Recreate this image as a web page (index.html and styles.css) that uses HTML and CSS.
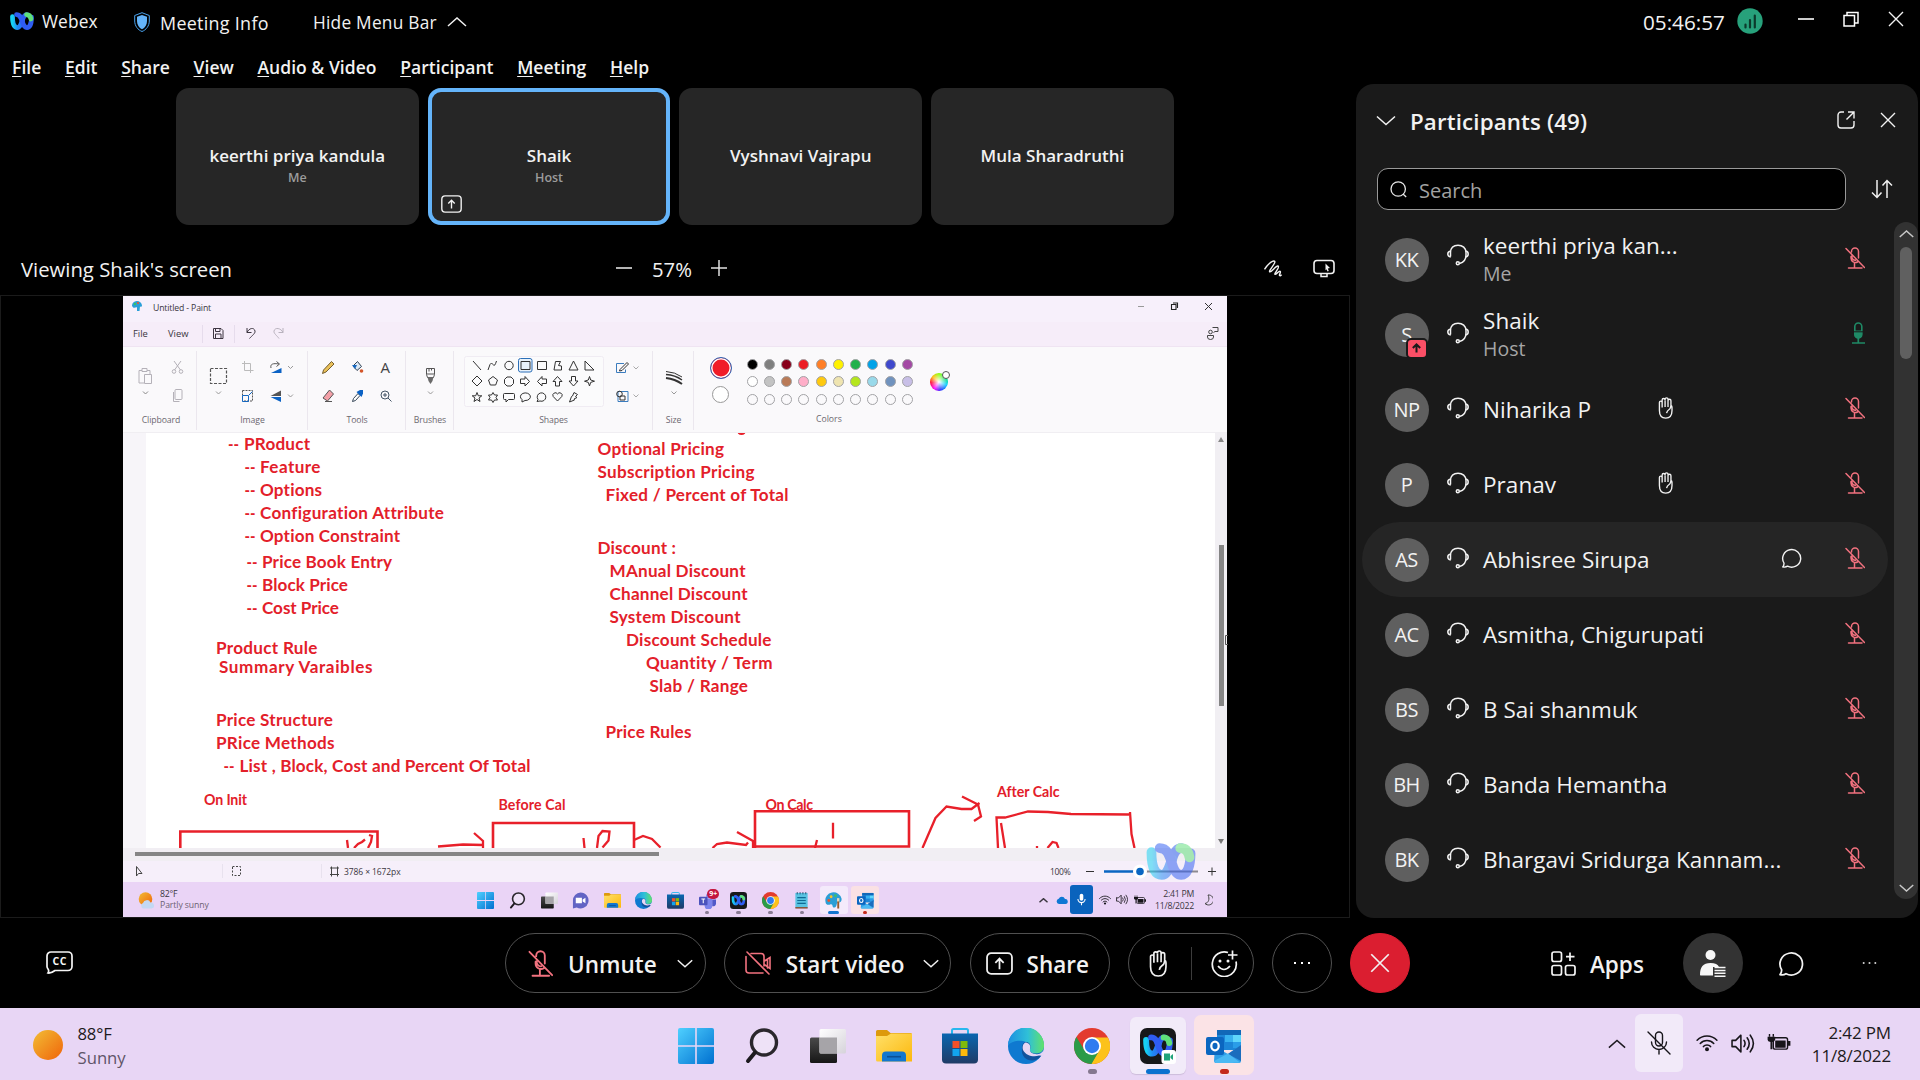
FILE: index.html
```html
<!DOCTYPE html>
<html lang="en">
<head>
<meta charset="utf-8">
<title>Webex</title>
<link rel="stylesheet" href="styles.css">
</head>
<body>
<svg class="sprite" aria-hidden="true">
  <defs>
    <linearGradient id="g-win" x1="0" y1="0" x2="1" y2="1"><stop offset="0" stop-color="#4fd0ff"/><stop offset="1" stop-color="#0070d0"/></linearGradient>
    <linearGradient id="g-sun" x1="0" y1="0" x2="1" y2="1"><stop offset="0" stop-color="#f2bd35"/><stop offset="1" stop-color="#f0640a"/></linearGradient>
    <linearGradient id="g-fold" x1="0" y1="0" x2="1" y2="1"><stop offset="0" stop-color="#ffe069"/><stop offset="1" stop-color="#fcb80d"/></linearGradient>
    <linearGradient id="g-store" x1="0" y1="0" x2="0" y2="1"><stop offset="0" stop-color="#0a66b0"/><stop offset="1" stop-color="#1f3b66"/></linearGradient>
    <linearGradient id="g-edge" x1="0" y1="0" x2="1" y2="0"><stop offset="0" stop-color="#1d8fe0"/><stop offset=".55" stop-color="#2fc0d8"/><stop offset="1" stop-color="#62e26a"/></linearGradient>
    <linearGradient id="g-cy" x1="0" y1="0" x2="1" y2="0"><stop offset="0" stop-color="#16d2f2"/><stop offset=".5" stop-color="#1f8af5"/><stop offset="1" stop-color="#2c6cf0"/></linearGradient>
    <linearGradient id="g-dark" x1="0" y1="0" x2="0" y2="1"><stop offset="0" stop-color="#4a4a4a"/><stop offset="1" stop-color="#161616"/></linearGradient>
    <linearGradient id="g-lite" x1="0" y1="0" x2="1" y2="1"><stop offset="0" stop-color="#ffffff"/><stop offset="1" stop-color="#d6d3da"/></linearGradient>
  </defs>
  <symbol id="webex" viewBox="0 0 48 36">
    <g fill="none" stroke-width="9.500" stroke-linecap="round">
      <path d="M25 16C27 9 30 5 34 5" stroke="#2a5cf0"/>
      <path d="M5 9C5 22 8 31 15 31C21 31 22 23 25 16" stroke="url(#g-cy)"/>
      <path d="M13 5C20 5 22 11 25 20C27 27 30 31 34 31C40 31 43 22 43 10" stroke="#2f5df2"/>
      <path d="M33 5C38 5 41 8 42 14" stroke="#5fe07a"/>
    </g>
  </symbol>
  <symbol id="mic-off" viewBox="0 0 20 22"><g fill="none" stroke="currentColor" stroke-width="1.500" stroke-linecap="round"><path d="M6.500 5V4.500a3.500 3.500 0 0 1 7 0V11M6 9.500V11a4.500 4.500 0 0 0 6.500 4M9.500 15.500V20.500M3.500 21H17M1 1.500L19.500 20.500M6.800 9C6.800 12 8.500 13.500 10.500 13.300"/></g></symbol>
  <symbol id="mic-on" viewBox="0 0 14 22"><rect x="3.800" y="1" width="7" height="15" rx="3.500" fill="none" stroke="#1f8a66" stroke-width="1.600"/><path d="M3.500 8.500h7.600v4a3.800 3.800 0 0 1-7.600 0z" fill="#1f8a66"/><path d="M2 9.800h10" stroke="#1a1a1a" stroke-width="1"/><path d="M7.300 16v4.500M1 21h13" stroke="#1f8a66" stroke-width="1.700"/></symbol>
  <symbol id="headset" viewBox="0 0 22 22"><g fill="none" stroke="#f2f2f2" stroke-width="1.500"><path d="M3.500 12.500V8.500C3.500 4 6.500 1.200 11 1.200S19 4 19 8.500V11C19 16 16.500 18.500 12.500 19.500"/><path d="M3.800 7C1 7.500 .8 9 .8 10S1.200 12.500 3.800 13M18.800 7C21 7.500 21.200 9 21.200 10S21 12.500 18.600 13" /><circle cx="10.800" cy="19.300" r="1.500"/></g></symbol>
  <symbol id="hand" viewBox="0 0 14 21"><path d="M1.200 11V5.200a1.300 1.300 0 0 1 2.600 0V2.800a1.400 1.400 0 0 1 2.800 0V2.200a1.400 1.400 0 0 1 2.800 0v1.300a1.400 1.400 0 0 1 2.800 0V8a2 2 0 0 1 1 1.800V13c0 5-2 7.200-6 7.200S1.200 18 1.200 13zM3.800 4.500V10M6.600 3V9.500M9.400 3V9.500M12.200 8C12 9.500 12 10.500 11 11.500C9.500 12.500 8.500 13 8 15.500" fill="none" stroke="currentColor" stroke-width="1.300"/></symbol>
  <symbol id="chat" viewBox="0 0 20 20"><path d="M2.500 15A9 8.800 0 1 1 6 18.200C4.800 19 3 19.300 1.200 18.900C2.300 17.800 2.600 16.500 2.500 15z" fill="none" stroke="currentColor" stroke-width="1.400" stroke-linejoin="round"/></symbol>
  <symbol id="x" viewBox="0 0 16 16"><path d="M1 1L15 15M15 1L1 15" stroke="currentColor" stroke-width="1.400" fill="none"/></symbol>
  <symbol id="chev" viewBox="0 0 20 10"><path d="M1 1L10 9L19 1" stroke="currentColor" stroke-width="1.500" fill="none" vector-effect="non-scaling-stroke"/></symbol>
  <symbol id="chev-up" viewBox="0 0 20 10"><path d="M1 9L10 1L19 9" stroke="currentColor" stroke-width="1.500" fill="none" vector-effect="non-scaling-stroke"/></symbol>
  <symbol id="share-box" viewBox="0 0 26 22"><g fill="none" stroke="currentColor" stroke-width="1.700"><rect x="1" y="1" width="24" height="20" rx="4"/><path d="M13 16.500V6.500M9 10.300L13 6.300L17 10.300"/></g></symbol>
  <symbol id="win" viewBox="0 0 36 36"><path d="M0 2a2 2 0 0 1 2-2H17.200V17.200H0zM18.800 0H34a2 2 0 0 1 2 2V17.200H18.800zM0 18.800H17.200V36H2a2 2 0 0 1-2-2zM18.800 18.800H36V34a2 2 0 0 1-2 2H18.800z" fill="url(#g-win)"/></symbol>
  <symbol id="find" viewBox="0 0 36 36"><circle cx="20" cy="14.500" r="12.500" fill="#f3edf9" fill-opacity=".5" stroke="#2a272c" stroke-width="3.400"/><path d="M11 24.500L4 33" stroke="#1d1a1f" stroke-width="4" stroke-linecap="round"/></symbol>
  <symbol id="tasks" viewBox="0 0 36 36"><rect x="0" y="9.500" width="27" height="25.500" rx="1.500" fill="url(#g-dark)"/><rect x="9.500" y="1" width="26.500" height="24.500" rx="1.500" fill="url(#g-lite)"/><path d="M9.500 9.500H27V25.500H11a1.500 1.500 0 0 1-1.500-1.500z" fill="#a6a4a8"/></symbol>
  <symbol id="folder" viewBox="0 0 36 36"><path d="M0 3.500A1.500 1.500 0 0 1 1.500 2H11L14.500 5H34.500A1.500 1.500 0 0 1 36 6.500V14H0z" fill="#dd9a0c"/><path d="M0 8H11L15 5.500H36V33.500H1.500A1.500 1.500 0 0 1 0 32z" fill="url(#g-fold)"/><path d="M6 33.500V27.500a4 4 0 0 1 4-4H26a4 4 0 0 1 4 4V33.500z" fill="#1277cf"/><path d="M11 28.700H25" stroke="#0b4f95" stroke-width="1.600"/></symbol>
  <symbol id="store" viewBox="0 0 36 36"><path d="M10 8V2.500a1.500 1.500 0 0 1 1.500-1.500H24.500A1.500 1.500 0 0 1 26 2.500V8" fill="none" stroke="#29b7ee" stroke-width="2"/><path d="M0 5.500H36V31.500a4 4 0 0 1-4 4H4a4 4 0 0 1-4-4z" fill="url(#g-store)"/><path d="M10.500 13h7v7h-7z" fill="#f2502a"/><path d="M18.500 13h7v7h-7z" fill="#80ba0b"/><path d="M10.500 21h7v7h-7z" fill="#12a4ee"/><path d="M18.500 21h7v7h-7z" fill="#fdb90b"/></symbol>
  <symbol id="edge" viewBox="0 0 36 36"><circle cx="18" cy="18" r="18" fill="#0f79d0"/><path d="M0 17A18 18 0 0 1 36 18C36 23 32 25.500 27.500 25.500C23 25.500 21 23.500 22 21C23 18 20 14 15 13C9 12 3 14 0 17z" fill="url(#g-edge)"/><path d="M14 20C14 15 17 13.600 19 14C22 15 23 18 22 21C21 24.500 26 26.500 31 25.500C33 25 34 26.500 32.500 28.500C27 36 12 33 14 20z" fill="#12529c"/><path d="M18 14.500C22 15.500 22.800 18 22 21C21.300 24 24.500 26.300 29 26.200C33 26 35 23.500 35.500 22L36 28L31 27.500C26 29.500 18 28 15 22C14 19 15 15 18 14.500z" fill="#e6d6f4"/></symbol>
  <symbol id="chrome" viewBox="0 0 36 36"><circle cx="18" cy="18" r="18" fill="#e33b2e"/><path d="M18 9.500H33.900A18 18 0 0 1 17 36L25.400 22.200z" fill="#fcc21b"/><path d="M2.400 9A18 18 0 0 0 17.500 36L25.400 22.300L10.600 22.200z" fill="#2a9b48"/><circle cx="18" cy="18" r="9" fill="#fff"/><circle cx="18" cy="18" r="7.200" fill="#2f7cf0"/></symbol>
  <symbol id="webex-app" viewBox="0 0 36 36"><rect width="36" height="36" rx="7" fill="#17181a"/><use href="#webex" x="3" y="6" width="30" height="23"/></symbol>
  <symbol id="outlook" viewBox="0 0 36 36"><rect x="11" y="2" width="24" height="20" rx="2" fill="#1c86d8"/><path d="M19 7h8v7h-8z" fill="#38b2f0"/><path d="M27 7h8v7h-8z" fill="#5fd6fb"/><path d="M11 2h24v5H11z" fill="#1168b8"/><path d="M27 14h8v6h-8z" fill="#2a9de8"/><path d="M9 19L22 26L35 17V33a2 2 0 0 1-2 2H10a2 2 0 0 1-2-2z" fill="#2f9fe8"/><path d="M22 26L35 17V33z" fill="#1b6dbd"/><path d="M8 33L22 25.500L34 34.500C33 35 11 35 10 35z" fill="#4bb9f3"/><rect x="0" y="9" width="18" height="18" rx="2" fill="#0b66c0"/><ellipse cx="9" cy="18" rx="3.700" ry="4.300" fill="none" stroke="#fff" stroke-width="2.300"/></symbol>
  <symbol id="wifi" viewBox="0 0 24 20"><g fill="none" stroke="#17151a" stroke-width="1.700" stroke-linecap="round"><path d="M1 7C7 .5 17 .5 23 7M4.500 10.500C8.500 6 15.500 6 19.500 10.500M8 14C10 11.500 14 11.500 16 14"/></g><circle cx="12" cy="17" r="2.200" fill="#17151a"/></symbol>
  <symbol id="vol" viewBox="0 0 24 20"><g fill="none" stroke="#17151a" stroke-width="1.500" stroke-linejoin="round" stroke-linecap="round"><path d="M1 7V13H4.500L9.500 18V2L4.500 7zM12.500 7Q14.500 10 12.500 13M15.500 4.500Q19.500 10 15.500 15.500M18.500 2Q24.500 10 18.500 18"/></g></symbol>
  <symbol id="batt" viewBox="0 0 24 20"><rect x="6" y="5" width="15" height="12" rx="2" fill="none" stroke="#17151a" stroke-width="1.500"/><path d="M8 8h11v7.500H8zM21.500 8.500H24v5h-2.500zM0 4H8V7Q7 9.500 5 9.500V17H3V9.500Q0 9 0 7z" fill="#17151a"/><path d="M2 1v3M6 1v3" stroke="#17151a" stroke-width="1.500"/></symbol>
</svg>

<div class="desktop">
  <header class="titlebar">
    <svg class="logo"><use href="#webex"/></svg>
    <span class="t-webex">Webex</span>
    <svg class="shield" viewBox="0 0 16 20"><path d="M8 .7L15.300 3.500V9C15.300 14 12 18 8 19.500C4 18 .7 14 .7 9V3.500z" fill="none" stroke="#4aa3ee" stroke-width="1"/><path d="M8 3L13 4.800V9C13 13 11 15.800 8 17.200C5 15.800 3 13 3 9V4.800z" fill="#64b4fa"/></svg>
    <span class="t-info">Meeting Info</span>
    <span class="t-hide">Hide Menu Bar</span>
    <svg class="hide-chev"><use href="#chev-up"/></svg>
    <span class="clock">05:46:57</span>
    <svg class="signal" viewBox="0 0 26 26"><circle cx="13" cy="13" r="12.700" fill="#27a17b"/><path d="M8.500 16.500v3M13 12v7.500M17.800 7.500v12" stroke="#0c3a2c" stroke-width="2.200" stroke-linecap="round"/></svg>
    <svg class="w-min" viewBox="0 0 16 16"><path d="M0 8H16" stroke="#fff" stroke-width="1.600"/></svg>
    <svg class="w-max" viewBox="0 0 16 16"><path d="M1 4.500H11.500V15H1zM4 4V1.500H15V12H12" fill="none" stroke="#fff" stroke-width="1.500"/></svg>
    <svg class="w-close"><use href="#x"/></svg>
  </header>
  <nav class="menubar">
    <span><u>F</u>ile</span><span><u>E</u>dit</span><span><u>S</u>hare</span><span><u>V</u>iew</span><span><u>A</u>udio &amp; Video</span><span><u>P</u>articipant</span><span><u>M</u>eeting</span><span><u>H</u>elp</span>
  </nav>

  <main class="main">
    <section class="left">
      <div class="tiles">
        <div class="tile"><b>keerthi priya kandula</b><i>Me</i></div>
        <div class="tile active"><b>Shaik</b><i>Host</i><svg class="tile-share"><use href="#share-box"/></svg></div>
        <div class="tile"><b>Vyshnavi Vajrapu</b></div>
        <div class="tile"><b>Mula Sharadruthi</b></div>
      </div>
      <div class="viewbar">
        <span class="viewing">Viewing Shaik's screen</span>
        <svg class="v-minus" viewBox="0 0 16 16"><path d="M0 8H16" stroke="#c9c9c9" stroke-width="1.800"/></svg>
        <span class="v-pct">57%</span>
        <svg class="v-plus" viewBox="0 0 16 16"><path d="M0 8H16M8 0V16" stroke="#e0e0e0" stroke-width="1.500"/></svg>
        <svg class="v-pen" viewBox="0 0 20 18"><path d="M1 10C4 5 9 .5 11.500 1.200C14 2.500 5 11.500 6.500 12.500C8.500 13.500 13.500 5 15.500 6.500C17.500 8 11 14 12 15C13 16 16 11.500 17.500 12C19 13 16 15.500 17 16.500C17.500 17 18.500 16.500 19 15.500" fill="none" stroke="#f2f2f2" stroke-width="1.500"/></svg>
        <svg class="v-mon" viewBox="0 0 22 18"><rect x="1" y="1" width="20" height="13" rx="3" fill="none" stroke="#f2f2f2" stroke-width="1.600"/><path d="M8 14V17H14V14" fill="none" stroke="#f2f2f2" stroke-width="1.500"/><path d="M12.500 4L17 8.500L14.800 9L15.800 11.500L14.500 12L13.500 9.800L12.500 10.800z" fill="#f2f2f2"/></svg>
      </div>
      <div class="stage">
        <div class="shared">
          <div class="p-title">
            <svg class="p-logo" viewBox="0 0 10 10"><path d="M0 5A5 4.700 0 0 1 10 4.500C10 6 8.500 6 8 5.500L7.500 10H5V6.500C4 5.500 2 8.500 0 5z" fill="#2a9fd8"/><circle cx="3" cy="3" r="1.200" fill="#35c36a"/><circle cx="6" cy="2" r="1.100" fill="#f2542c"/></svg>
            <span>Untitled - Paint</span>
            <svg class="p-win" viewBox="1138 301 74 10"><path d="M1138 306.500h6" stroke="#999" stroke-width="1"/><path d="M1171.500 304.500h4.500v5h-4.500zM1173 303h4.500v5" fill="none" stroke="#222" stroke-width="1.100"/><path d="M1205 303l7 7M1212 303l-7 7" stroke="#333" stroke-width="1"/></svg>
          </div>
          <div class="p-menu">
            <span class="p-file">File</span><span class="p-view">View</span>
            <svg class="p-menuicons" viewBox="200 322 90 25"><g fill="none" stroke="#3c3540" stroke-width="1"><path d="M202.500 325v18M234.500 325v18" stroke="#e6dcec"/><path d="M213.500 328.500h7.500l2 2v8h-9.500zM215.500 328.500v3h4.500v-3M215.500 338.500v-4.500h5.500v4.500"/><path d="M247 328v4.500h4.500M247 332.500C249 328 254 327 255 331C255.500 333.500 252 335.500 249.500 338.500"/><path d="M283 328v4.500h-4.500M283 332.500C281 328 275 327 274 331C273.500 333.500 277 335.500 279 338.500" stroke="#b9b2be"/></g></svg>
            <svg class="p-person" viewBox="1207 326 12 14"><g fill="none" stroke="#444" stroke-width="1"><circle cx="1210.500" cy="332" r="1.800"/><path d="M1207.500 335.500h6v1.500a3 2.500 0 0 1-6 0zM1212.500 327.500h5.500v4h-3l-1.500 1"/></g></svg>
          </div>
          <div class="ribbon">
            <div class="rg rg-clip"><svg viewBox="123 347 74 65"><g fill="none" stroke="#b4b1b8" stroke-width="1"><path d="M142 370.500h-3v12.500h5M147 370.500h3v4M142 368.500h5v3h-5zM144.500 374.500h7v9h-7z"/><path d="M143 391.500l2.500 2.500l2.500-2.500" stroke="#888"/><path d="M174 361l6.500 9M181 361l-6.500 9"/><circle cx="174" cy="371.500" r="1.800"/><circle cx="181" cy="371.500" r="1.800"/><rect x="175" y="389.500" width="7" height="10" rx="1"/><path d="M173.500 392v9.500h6"/></g></svg><span>Clipboard</span></div>
            <div class="rg rg-image"><svg viewBox="197 347 111 65"><g fill="none" stroke="#555" stroke-width="1"><rect x="210.500" y="368.500" width="16" height="15" stroke-dasharray="3 1.500" stroke-width="1.200"/><path d="M216 391.500l2.500 2.500l2.500-2.500M288 366l2.500 2.500l2.500-2.500M288 394.500l2.500 2.500l2.500-2.500" stroke="#999"/><path d="M244.500 361v9.500h9M242 363.500h8.500v9.500" stroke="#bbb"/><rect x="242.500" y="390.500" width="10" height="10.500" stroke-dasharray="2 1"/><path d="M242.500 395.500h6v6h-6z" stroke="#1668c0"/><path d="M249 395l3.500-3.500" stroke="#1668c0"/><path d="M271 368C270 364 273 363 279 364M276.500 361.500l3 2.500l-3 2.500"/></g><path d="M271 373h10.500v-5z" fill="#0b62c4"/><path d="M270.500 396h10.500v-5.500z" fill="#555"/><path d="M270.500 397h10.500v5z" fill="#0b62c4"/></svg><span>Image</span></div>
            <div class="rg rg-tools"><svg viewBox="308 347 98 65"><path d="M322.500 373.500l1-3.500l8-8.500l2.500 2.500l-8 8z" fill="#eac15a" stroke="#665022" stroke-width=".9"/><path d="M353 366l4.500-4.500l4 5l-4.500 4z" fill="#dce9f5" stroke="#345" stroke-width="1"/><path d="M352 365h5l-2 4z" fill="#1668c0"/><circle cx="361.500" cy="371" r="1.800" fill="#d4562a"/><text x="380.500" y="373" class="glyph-a">A</text><path d="M323 398l6.500-8l4 4l-6 7z" fill="#f3a0a8" stroke="#555" stroke-width="1"/><path d="M325 401.500h7" stroke="#555"/><path d="M352.500 401.500l1-3l4.500-5l2 2l-4.500 5z" fill="#fff" stroke="#345" stroke-width="1"/><path d="M356.500 392l5 5l1.500-3.500v-3.500h-3z" fill="#0b62c4"/><g fill="none" stroke="#456" stroke-width="1"><circle cx="385" cy="395" r="4"/><path d="M388 398l3.500 3.500M383 395h4M385 393v4"/></g></svg><span>Tools</span></div>
            <div class="rg rg-brush"><svg viewBox="406 347 48 65"><g fill="none" stroke="#555" stroke-width="1"><path d="M426.500 368.500h8v6l-1 3h-6l-1-3zM426.500 374h8M429 368.500v3M431.500 368.500v2"/><path d="M428 391.500l2.500 2.500l2.500-2.500" stroke="#999"/></g><path d="M427.500 377h6l-1 4l-2 3l-2-3z" fill="#6a6a6a"/></svg><span>Brushes</span></div>
            <div class="rg rg-shapes"><svg viewBox="454 347 199 65"><rect x="464.500" y="356.500" width="139" height="50" rx="2" fill="#fbfbfc" stroke="#f0ecf3"/><rect x="518.500" y="358.500" width="13.500" height="13.500" rx="2" fill="#e9f2fb" stroke="#2c6fb8"/><g fill="none" stroke="#333" stroke-width="1"><path d="M473 361l8 9M488 370l2-5.500q1.500-3 3 0q1.500 3 3.500-3.500"/><circle cx="509" cy="365.500" r="4.200"/><path d="M521 361.500h9v8h-9zM537.500 361.500h9v8h-9zM554 370l1.500-8.500h5l-2 4l3 .5v4zM573.500 361l4.500 9h-9zM585 361l9 9h-9z"/><path d="M477 376l5 5l-5 5l-5-5zM493 376.500l4.500 3.500l-1.800 5h-5.400l-1.800-5zM507 377h4l2.500 2.500v4l-2.500 2.500h-4l-2.500-2.500v-4zM520.500 379h4.500v-2.500l4.500 5l-4.500 4.500v-2.500h-4.500zM546.500 379h-4.500v-2.500l-4.500 5l4.500 4.500v-2.500h4.500zM555.500 386v-4.500h-2.500l4.500-5l4.500 5h-2.500v4.500zM571.500 376.500v4.500h-2.500l4.500 5l4.500-5h-2.500v-4.500zM589.500 376.500l1.200 3.500l3.800 1.200l-3.800 1.200l-1.200 3.600l-1.200-3.600l-3.800-1.200l3.800-1.200z"/><path d="M477 392.500l1.300 3.300h3.500l-2.800 2.200l1 3.500l-3-2l-3 2l1-3.500l-2.800-2.200h3.500zM493 392.500l1.500 2.500h3l-1.500 2.500l1.500 2.500h-3l-1.500 2.500l-1.500-2.500h-3l1.500-2.500l-1.500-2.500h3zM504.500 393.500h9q1 0 1 1v4q0 1-1 1h-5l-2.500 2.500v-2.500h-1.500q-1 0-1-1v-4q0-1 1-1zM522 402v-2.500a5 3.800 0 1 1 3 1zM537 401.500l1-2a4.300 4.200 0 1 1 2 1.500zM557.500 401l-4.300-4.500a2.400 2.400 0 0 1 4.300-2.500a2.400 2.400 0 0 1 4.300 2.500zM574 392.500l3.500 2l-2 2l1.500 1l-3 1.500l.500 1l-5 2l2-5.500l1-.5z"/><path d="M624 363.500h-7.500v9h9v-3" stroke="#3b7cbe"/><path d="M620 369.500l7-7l1.500 1.500l-6.500 6.500l-2.500.5z"/><path d="M633.500 366.500l2.500 2.500l2.500-2.500M633.500 394.500l2.500 2.500l2.500-2.500" stroke="#aaa"/><path d="M618 391.500h10v10h-10z" stroke="#3b7cbe"/><circle cx="619.500" cy="394" r="2.800"/><path d="M620 396h5v4h-5z"/></g></svg><span>Shapes</span></div>
            <div class="rg rg-size"><svg viewBox="653 347 41 65"><g fill="none" stroke="#333"><path d="M666 371.500Q675 372 682 377" stroke-width="1"/><path d="M666 374.500Q675 375 682 380" stroke-width="1.500"/><path d="M666 378Q675 379 682 384" stroke-width="2"/><path d="M671.500 391.500l2.500 2.500l2.500-2.500" stroke="#999"/></g></svg><span>Size</span></div>
            <div class="rg-colors">
              <div class="pick"><span class="c1"></span><span class="c2"></span></div>
              <div class="pal-wrap">
                <div class="palette">
                  <i class="k1"></i><i class="k2"></i><i class="k3"></i><i class="k4"></i><i class="k5"></i><i class="k6"></i><i class="k7"></i><i class="k8"></i><i class="k9"></i><i class="k10"></i>
                  <i class="k11"></i><i class="k12"></i><i class="k13"></i><i class="k14"></i><i class="k15"></i><i class="k16"></i><i class="k17"></i><i class="k18"></i><i class="k19"></i><i class="k20"></i>
                  <i></i><i></i><i></i><i></i><i></i><i></i><i></i><i></i><i></i><i></i>
                </div>
                <span class="pal-label">Colors</span>
              </div>
              <div class="wheel"><span></span></div>
            </div>
          </div>
          <div class="canvas-row">
            <svg class="canvas" viewBox="123 433 1092 415">
              <path d="M123 433h23v415h-23z" fill="#f7f5f9"/>
              <g class="ink-text">
                <text x="228" y="449.700" textLength="11" lengthAdjust="spacingAndGlyphs">--</text><text x="244" y="449.700" textLength="66">PRoduct</text>
                <text x="244.500" y="473" textLength="11" lengthAdjust="spacingAndGlyphs">--</text><text x="260" y="473" textLength="60.500">Feature</text>
                <text x="244.500" y="496" textLength="11" lengthAdjust="spacingAndGlyphs">--</text><text x="260" y="496" textLength="62">Options</text>
                <text x="244.500" y="519" textLength="11" lengthAdjust="spacingAndGlyphs">--</text><text x="260" y="519" textLength="184">Configuration Attribute</text>
                <text x="244.500" y="542" textLength="11" lengthAdjust="spacingAndGlyphs">--</text><text x="260" y="542" textLength="140">Option Constraint</text>
                <text x="246.500" y="568" textLength="11" lengthAdjust="spacingAndGlyphs">--</text><text x="262" y="568" textLength="130">Price Book Entry</text>
                <text x="246.500" y="591" textLength="11" lengthAdjust="spacingAndGlyphs">--</text><text x="262" y="591" textLength="86">Block Price</text>
                <text x="246.500" y="614" textLength="11" lengthAdjust="spacingAndGlyphs">--</text><text x="262" y="614" textLength="77">Cost Price</text>
                <text x="216" y="653.500" textLength="101.500">Product Rule</text>
                <text x="219" y="672.500" textLength="153.500">Summary Varaibles</text>
                <text x="216" y="726" textLength="117">Price Structure</text>
                <text x="216" y="749" textLength="118.500">PRice Methods</text>
                <text x="223.500" y="772" textLength="11" lengthAdjust="spacingAndGlyphs">--</text><text x="239.500" y="772" textLength="291">List , Block, Cost and Percent Of Total</text>
                <text x="597.500" y="454.700" textLength="126.500">Optional Pricing</text>
                <text x="597.500" y="478" textLength="157">Subscription Pricing</text>
                <text x="605.500" y="501" textLength="183">Fixed / Percent of Total</text>
                <text x="597.500" y="554" textLength="78.500">Discount :</text>
                <text x="609.500" y="577" textLength="136">MAnual Discount</text>
                <text x="609.500" y="600" textLength="138">Channel Discount</text>
                <text x="609.500" y="623" textLength="131">System Discount</text>
                <text x="626" y="646" textLength="145.500">Discount Schedule</text>
                <text x="646" y="669" textLength="126.500">Quantity / Term</text>
                <text x="649.500" y="692" textLength="98.500">Slab / Range</text>
                <text x="605.500" y="737.500" textLength="86">Price Rules</text>
                <g class="ink-small">
                  <text x="204" y="804.500" textLength="43">On Init</text>
                  <text x="498.500" y="810" textLength="67">Before Cal</text>
                  <text x="765.500" y="810" textLength="47.500">On Calc</text>
                  <text x="997" y="797" textLength="62.500">After Calc</text>
                </g>
              </g>
              <g fill="none" stroke="#e8202a" stroke-width="2.300">
                <path d="M738.500 432.500Q741.500 435 744.500 432.500"/>
                <path d="M180.300 848V831.500H377.500V848M493 848V823H634V848" stroke-width="2.600"/>
                <path d="M347 840l1 8M354 848l4-4l4-2l3-2.500M369 835l3 1l-1 6l-3 6"/>
                <path d="M438 846.500l25-2l20 .5M474 833l9 8v7"/>
                <path d="M583.500 838l1 10M597 848l1.500-12l4-5l7 .5l-1 9l-6 7"/>
                <path d="M634 840l9-4l9 3l8.500 8.500"/>
                <path d="M712.500 848l4.500-4l10-1.500l19 2.500l2-2.500M737 832l16 9v7"/>
                <path d="M755 848V811.300H909V846.500H755" stroke-width="2.600"/>
                <path d="M833 822.700V838.500M817 840l-2 8"/>
                <path d="M922.500 848l13-30l11-11.500l15 2.500h10l8-6M962 796.500l16 8l3 12l-7 4.500"/>
                <path d="M998 848l-1.500-30.500h8.500l23-6l20 .5l23 2l58 .5M1130 812l1.500 22l3 14M1001 823l4 25M1037 846v2M1047.500 848l5-6l4 1l2 5"/>
              </g>
            </svg>
            <div class="vscroll"><b class="up"></b><span></span><b class="down"></b></div>
          </div>
          <div class="hscroll"><span></span></div>
          <div class="p-status">
            <svg class="st-left" viewBox="123 861 218 21"><g fill="none" stroke="#444" stroke-width="1"><path d="M136.500 866.500v9.500l2-2.500h3.500z"/><path d="M222.500 864v14M321.500 864v14" stroke="#e8e2ee"/><rect x="232.500" y="866.500" width="8" height="9" stroke-dasharray="2 1.500"/><path d="M330 868h9M330 874.500h9M331.500 866.500v10M337.500 866.500v10"/></g></svg>
            <span class="dims">3786 × 1672px</span>
            <span class="pct">100%</span>
            <svg class="st-right" viewBox="1080 861 147 21"><path d="M1086 871.500h8M1208 871.500h8M1212 867.500v8" stroke="#333"/><path d="M1104 871.500h36" stroke="#0a66c2" stroke-width="2.500"/><path d="M1144 871.500h54" stroke="#8c8a90" stroke-width="2"/><circle cx="1140" cy="871.500" r="7" fill="#fff"/><circle cx="1140" cy="871.500" r="3.800" fill="#0a66c2"/></svg>
          </div>
          <div class="mini-bar">
            <svg class="mini-sun" viewBox="0 0 17 17"><circle cx="7.500" cy="7" r="6.800" fill="url(#g-sun)"/><path d="M5 16.500a3 3 0 0 1 0-5.500a4 4 0 0 1 7.500-.5a3 3 0 0 1 1 6z" fill="#c3d8f4"/></svg>
            <div class="mini-weather"><span>82°F</span><em>Partly sunny</em></div>
            <div class="mini-icons">
              <span><svg><use href="#win"/></svg></span>
              <span><svg><use href="#find"/></svg></span>
              <span><svg><use href="#tasks"/></svg></span>
              <span><svg viewBox="0 0 36 36"><path d="M18 1A17 17 0 1 1 10 33L2 35V18A17 17 0 0 1 18 1z" fill="#6264c4"/><path d="M8 12h13v12H8zM22.500 16l6-4v12l-6-4z" fill="#fff"/></svg></span>
              <span><svg><use href="#folder"/></svg></span>
              <span><svg><use href="#edge"/></svg></span>
              <span><svg><use href="#store"/></svg></span>
              <span class="run"><svg viewBox="0 0 36 36"><circle cx="20" cy="8" r="5" fill="#7b83eb"/><circle cx="31" cy="11" r="4" fill="#5059c9"/><path d="M10 14h18v14a8 8 0 0 1-16 2z" fill="#7b83eb"/><path d="M28 16h8v9a6 6 0 0 1-8 5z" fill="#5059c9"/><rect x="0" y="10" width="18" height="18" rx="2" fill="#4b53bc"/><path d="M5 15h8M9 15v9" stroke="#fff" stroke-width="2.200"/></svg><b class="count">9+</b></span>
              <span class="run"><svg><use href="#webex-app"/></svg></span>
              <span class="run"><svg><use href="#chrome"/></svg></span>
              <span class="run"><svg viewBox="0 0 36 36"><rect x="5" y="2" width="26" height="32" fill="#59c3e2"/><path d="M5 32h26v3H5z" fill="#8a4b2a"/><path d="M9 12h18M9 18h18M9 24h18" stroke="#0f6b94" stroke-width="2.400"/><path d="M9 0v5M15 0v5M21 0v5M27 0v5" stroke="#135" stroke-width="1.500"/></svg></span>
              <span class="on"><svg viewBox="0 0 36 36"><path d="M1 20A17 16 0 0 1 35 14C36 20 32 23 27 22C24 22 26 31 20 33C14 34 18 25 12 26C6 29 1 26 1 20z" fill="#2b9ed6"/><circle cx="8" cy="18" r="3" fill="#e8542c"/><circle cx="13" cy="10" r="3" fill="#fbc02d"/><circle cx="22" cy="8" r="3" fill="#3fbf6a"/><path d="M28 13v8" stroke="#e8d9b8" stroke-width="5"/><path d="M28 20v15" stroke="#9a5b2d" stroke-width="4"/></svg></span>
              <span class="mail"><svg><use href="#outlook"/></svg></span>
            </div>
            <div class="mini-tray">
              <svg class="mt-chev"><use href="#chev-up"/></svg>
              <svg class="mt-cloud" viewBox="0 0 12 8"><path d="M3 8a2.700 2.700 0 0 1-.3-5.300A3.500 3.500 0 0 1 9 3a2.500 2.500 0 0 1 .5 5z" fill="#0f78d4"/></svg>
              <span class="mt-mic"><svg viewBox="0 0 10 14"><rect x="3" y=".5" width="4" height="8" rx="2" fill="#fff"/><path d="M1 6.500a4 4 0 0 0 8 0M5 10.500v3" fill="none" stroke="#fff" stroke-width="1.200"/></svg></span>
              <svg class="mt-wifi"><use href="#wifi"/></svg>
              <svg class="mt-vol"><use href="#vol"/></svg>
              <svg class="mt-bat"><use href="#batt"/></svg>
              <div class="mini-time"><span>2:41 PM</span><span>11/8/2022</span></div>
              <svg class="mt-moon" viewBox="0 0 9 12"><path d="M4 1A5 5 0 1 1 1 9.500C4.500 9 6 5 4 1z" fill="none" stroke="#444"/></svg>
            </div>
          </div>
          <svg class="watermark"><use href="#webex"/></svg>
          <svg class="edge-cursor" viewBox="0 0 3 11"><path d="M3 .5H.5V9.500H3" fill="none" stroke="#555"/></svg>
        </div>
      </div>
    </section>

    <aside class="panel">
      <div class="panel-head">
        <svg class="ph-chev"><use href="#chev"/></svg>
        <h2>Participants (49)</h2>
        <svg class="ph-pop" viewBox="0 0 18 18"><path d="M7 1H4a3 3 0 0 0-3 3V14a3 3 0 0 0 3 3H14a3 3 0 0 0 3-3V10M9.500 8.500L16.800 1.200M11 1H17V7.500" fill="none" stroke="#f2f2f2" stroke-width="1.400"/></svg>
        <svg class="ph-x"><use href="#x"/></svg>
      </div>
      <div class="search-row">
        <div class="search"><svg viewBox="0 0 17 17"><circle cx="8.200" cy="8" r="7.200" fill="none" stroke="#e6e6e6" stroke-width="1.300"/><path d="M13 13l3.200 3" stroke="#e6e6e6" stroke-width="1.300"/></svg><span>Search</span></div>
        <svg class="sort" viewBox="0 0 22 20"><path d="M6 1V18M1 13.500L6 18.500L10.500 13.500M16 19V2M11.500 6.500L16 1.500L21 6.500" fill="none" stroke="#f2f2f2" stroke-width="1.500"/></svg>
      </div>
      <div class="list-wrap">
        <ul class="list">
          <li class="two"><span class="av">KK</span><svg class="hs"><use href="#headset"/></svg><span class="nm">keerthi priya kan...<small>Me</small></span><svg class="mic"><use href="#mic-off"/></svg></li>
          <li class="two host"><span class="av">S<span class="badge"><svg viewBox="0 0 12 12"><path d="M6 11V2M2 6L6 2L10 6" fill="none" stroke="#1a1a1a" stroke-width="2.200"/></svg></span></span><svg class="hs"><use href="#headset"/></svg><span class="nm">Shaik<small>Host</small></span><svg class="mic live"><use href="#mic-on"/></svg></li>
          <li><span class="av">NP</span><svg class="hs"><use href="#headset"/></svg><span class="nm">Niharika P</span><svg class="hand"><use href="#hand"/></svg><svg class="mic"><use href="#mic-off"/></svg></li>
          <li><span class="av">P</span><svg class="hs"><use href="#headset"/></svg><span class="nm">Pranav</span><svg class="hand"><use href="#hand"/></svg><svg class="mic"><use href="#mic-off"/></svg></li>
          <li class="hover"><span class="av">AS</span><svg class="hs"><use href="#headset"/></svg><span class="nm">Abhisree Sirupa</span><svg class="msg"><use href="#chat"/></svg><svg class="mic"><use href="#mic-off"/></svg></li>
          <li><span class="av">AC</span><svg class="hs"><use href="#headset"/></svg><span class="nm">Asmitha, Chigurupati</span><svg class="mic"><use href="#mic-off"/></svg></li>
          <li><span class="av">BS</span><svg class="hs"><use href="#headset"/></svg><span class="nm">B Sai shanmuk</span><svg class="mic"><use href="#mic-off"/></svg></li>
          <li><span class="av">BH</span><svg class="hs"><use href="#headset"/></svg><span class="nm">Banda Hemantha</span><svg class="mic"><use href="#mic-off"/></svg></li>
          <li><span class="av">BK</span><svg class="hs"><use href="#headset"/></svg><span class="nm">Bhargavi Sridurga Kannam...</span><svg class="mic"><use href="#mic-off"/></svg></li>
        </ul>
        <div class="pscroll"><svg><use href="#chev-up"/></svg><span></span><svg class="dn"><use href="#chev"/></svg></div>
      </div>
    </aside>
  </main>

  <footer class="controls">
    <svg class="cc" viewBox="0 0 27 23"><path d="M5 1H22a4 4 0 0 1 4 4V15.500a4 4 0 0 1-4 4H9C7 21 5 22.500 2 22C3 20.500 3 19.500 2 18A4 4 0 0 1 1 15.500V5a4 4 0 0 1 4-4z" fill="none" stroke="#f5f5f5" stroke-width="1.700"/><text x="6.500" y="13.800" class="cc-t" textLength="14">CC</text></svg>
    <div class="pills">
      <div class="pill p-unmute"><svg class="red i-mic"><use href="#mic-off"/></svg><span>Unmute</span><svg class="i-chev"><use href="#chev"/></svg></div>
      <div class="pill p-video"><svg class="red i-cam" viewBox="0 0 26 24"><g fill="none" stroke="currentColor" stroke-width="1.600" stroke-linecap="round"><path d="M6 2.500H16a3 3 0 0 1 3 3V15M18 22H4a3 3 0 0 1-3-3V5.500M19.500 10L25 6.500V17.500L20 14M2 1L24 23M22.500 17v-8"/></g></svg><span>Start video</span><svg class="i-chev"><use href="#chev"/></svg></div>
      <div class="pill p-share"><svg class="i-share"><use href="#share-box"/></svg><span>Share</span></div>
      <div class="pill p-react"><svg class="i-hand"><use href="#hand"/></svg><i></i><svg class="i-smile" viewBox="0 0 27 27"><g fill="none" stroke="#f5f5f5" stroke-width="1.700"><path d="M17 2.500A12 12.300 0 1 0 25 11.500M21.500 .5V9.500M17 5H26.500M7 16Q13 23 19 16"/></g><circle cx="9" cy="11" r="1.500" fill="#f5f5f5"/><circle cx="17" cy="11" r="1.500" fill="#f5f5f5"/></svg></div>
      <div class="pill p-more"><svg class="i-dots" viewBox="0 0 18 4"><path d="M1 1h2v2h-2zM8 1h2v2H8zM15 1h2v2h-2z" fill="#fff"/></svg></div>
      <div class="pill p-end"><svg><use href="#x"/></svg></div>
    </div>
    <svg class="apps-i" viewBox="0 0 25 25"><g fill="none" stroke="#f5f5f5" stroke-width="1.700"><rect x="1" y="1" width="9.500" height="9.500" rx="2"/><rect x="1" y="14.500" width="9.500" height="9.500" rx="2"/><rect x="14.500" y="14.500" width="9.500" height="9.500" rx="2"/><path d="M19 1.500V10M15 5.700H23.500"/></g></svg>
    <span class="apps-t">Apps</span>
    <div class="people"><svg viewBox="0 0 26 27"><circle cx="10.500" cy="5" r="5" fill="#f7f7f7"/><path d="M0 25C0 17 3 13 10.500 13C15 13 18 14.500 19 17H13V25.500H2Q0 25.500 0 25z" fill="#f7f7f7"/><path d="M14.500 17.500H25.500M14.500 20.400H25.500M14.500 23.300H25.500M14.500 26.200H25.500" stroke="#f7f7f7" stroke-width="1.500"/></svg></div>
    <svg class="c-chat"><use href="#chat"/></svg>
    <svg class="c-dots" viewBox="0 0 18 4"><path d="M1 1h2v2h-2zM8 1h2v2H8zM15 1h2v2h-2z" fill="#fff"/></svg>
  </footer>

  <div class="taskbar">
    <svg class="sun" viewBox="0 0 30 30"><circle cx="15" cy="15" r="15" fill="url(#g-sun)"/></svg>
    <div class="weather"><span>88°F</span><em>Sunny</em></div>
    <div class="icons">
      <span><svg><use href="#win"/></svg></span>
      <span><svg><use href="#find"/></svg></span>
      <span><svg><use href="#tasks"/></svg></span>
      <span><svg><use href="#folder"/></svg></span>
      <span><svg><use href="#store"/></svg></span>
      <span><svg><use href="#edge"/></svg></span>
      <span class="run"><svg><use href="#chrome"/></svg></span>
      <span class="on"><svg viewBox="0 0 36 36"><use href="#webex-app" width="36" height="36"/><rect x="21.500" y="22" width="14.500" height="14" rx="3" fill="#fff"/><path d="M24 25.500h6v7h-6zM30.500 28l2.500-2v6l-2.500-2z" fill="#1fa37a"/></svg></span>
      <span class="mail"><svg><use href="#outlook"/></svg></span>
    </div>
    <div class="tray">
      <svg class="t-chev"><use href="#chev-up"/></svg>
      <span class="t-mic"><svg viewBox="0 0 24 24"><g fill="none" stroke="#17151a" stroke-width="1.400" stroke-linecap="round"><rect x="8.500" y="1" width="7" height="14" rx="3.500"/><path d="M4.500 11a7.500 7.500 0 0 0 15 0M12 19v4M1 1L23 23"/></g></svg></span>
      <svg class="t-wifi"><use href="#wifi"/></svg>
      <svg class="t-vol"><use href="#vol"/></svg>
      <svg class="t-bat"><use href="#batt"/></svg>
      <div class="time"><span>2:42 PM</span><span>11/8/2022</span></div>
    </div>
  </div>
</div>
</body>
</html>
```
FILE: styles.css
```css
* { box-sizing: border-box; }
body { margin: 0; background: #000; color: #f2f2f2; font-family: "Open Sans", "Noto Sans", sans-serif; }
svg { display: block; flex: none; }
span { white-space: nowrap; }
.sprite { position: absolute; width: 0; height: 0; }
.desktop { width: 1920px; height: 1080px; overflow: hidden; display: flex; flex-direction: column; }

/* title bar */
.titlebar { height: 46px; display: flex; align-items: flex-start; font-size: 17.300px; font-weight: 500; line-height: 24px; }
.logo { width: 24px; height: 18px; margin: 12px 0 0 10px; }
.t-webex { margin: 10px 0 0 8px; width: 92px; letter-spacing: .15px; }
.shield { width: 16px; height: 20px; margin-top: 12px; }
.t-info { margin: 11px 0 0 10px; width: 153px; font-size: 17.900px; letter-spacing: .3px; }
.t-hide { margin: 11px 0 0 0; width: 134px; letter-spacing: .25px; }
.hide-chev { width: 20px; height: 10px; margin-top: 17px; }
.clock { margin: 10px 0 0 auto; width: 94px; font-size: 20.700px; font-weight: 400; }
.signal { width: 26px; height: 26px; margin-top: 8px; }
.w-min { width: 16px; height: 16px; margin: 11px 0 0 35px; }
.w-max { width: 16px; height: 16px; margin: 11px 0 0 29px; }
.w-close { width: 16px; height: 16px; margin: 11px 16px 0 29px; }
.menubar { height: 38px; padding: 9px 0 0 12px; display: flex; gap: 23.600px; font-size: 17.500px; font-weight: 600; line-height: 24px; letter-spacing: .04px; }
.menubar u { text-underline-offset: 2px; }

.main { height: 834px; display: flex; }
.left { width: 1356px; padding-top: 4px; }
.tiles { display: flex; gap: 9px; padding-left: 176px; height: 137px; }
.tile { width: 242.700px; border-radius: 13px; background: #262626; display: flex; flex-direction: column; align-items: center; padding-top: 56px; position: relative; }
.tile b { font-size: 17px; font-weight: 600; line-height: 24px; }
.tile i { font-style: normal; font-size: 12.500px; font-weight: 600; line-height: 20px; color: #9c9c9c; }
.tile.active { box-shadow: inset 0 0 0 4px #64b4fa; }
.tile-share { position: absolute; left: 13px; top: 107px; width: 21px; height: 18px; }
.viewbar { height: 70px; display: flex; align-items: flex-start; padding-left: 21px; font-size: 20.300px; font-weight: 500; line-height: 28px; }
.viewing { width: 595px; margin-top: 30px; }
.v-minus { width: 16px; height: 16px; margin-top: 35px; }
.v-pct { width: 59px; margin: 30px 0 0 20px; }
.v-plus { width: 16px; height: 16px; margin-top: 35px; }
.v-pen { width: 20px; height: 17px; margin: 35px 0 0 536px; }
.v-mon { width: 22px; height: 19px; margin: 34px 0 0 30px; }
.stage { width: 1350px; height: 623px; border: 1px solid #1b1b1b; padding-left: 122px; }

/* shared screen */
.shared { position: relative; width: 1104px; height: 621px; display: flex; flex-direction: column; color: #3a363e; font-family: "Open Sans", sans-serif; }
.p-title { height: 26px; background: #f7f0fb; display: flex; padding: 5px 0 0 9px; font-size: 8.700px; line-height: 10px; }
.p-title span { margin: 2px 0 0 11px; letter-spacing: -.15px; }
.p-logo { width: 10px; height: 10px; }
.p-win { width: 74px; height: 10px; margin: 0 15px 0 auto; }
.p-menu { height: 25px; background: #f6edf9; border-bottom: 1px solid #efe4f2; display: flex; font-size: 9.400px; line-height: 10px; }
.p-file { margin: 7px 0 0 10px; width: 35px; }
.p-view { margin-top: 7px; width: 32px; }
.p-menuicons { width: 90px; height: 25px; }
.p-person { width: 12px; height: 14px; margin: 4px 8px 0 auto; }
.ribbon { height: 86px; background: #faf9fb; border-bottom: 1px solid #f0eef2; display: flex; font-size: 8.700px; line-height: 12px; color: #6c6870; }
.rg { height: 83px; background: linear-gradient(#ebe7ee, #ebe7ee) right 4px / 1px 80px no-repeat; text-align: center; }
.rg svg { width: 100%; height: 65px; }
.rg span { display: block; margin-top: 2px; letter-spacing: -.1px; }
.rg-clip { width: 74px; }
.rg-clip span { padding-left: 2px; }
.rg-image { width: 111px; }
.rg-tools { width: 98px; }
.rg-brush { width: 48px; }
.rg-shapes { width: 199px; }
.rg-size { width: 41px; }
.glyph-a { font-size: 15px; fill: #444; }
.rg-colors { display: flex; }
.pick { width: 51px; padding: 10px 13px 0 15px; display: flex; flex-direction: column; align-items: center; gap: 7px; }
.c1 { width: 22px; height: 22px; border-radius: 50%; background: #f01c28; border: 1.500px solid #2f67b8; box-shadow: inset 0 0 0 1.500px #fff; }
.c2 { width: 17px; height: 17px; border-radius: 50%; border: 1px solid #999; background: #fff; }
.palette { display: grid; grid-template-columns: repeat(10, 11px); grid-auto-rows: 11px; column-gap: 6.260px; row-gap: 6.300px; padding: 12px 0 0 1.500px; }
.palette i { border-radius: 50%; border: 1px solid #a3a3a6; }
.palette .k1 { background: #000; } .palette .k2 { background: #7f7f7f; } .palette .k3 { background: #88001b; } .palette .k4 { background: #ec1c24; } .palette .k5 { background: #ff7f27; }
.palette .k6 { background: #fff200; } .palette .k7 { background: #22b14c; } .palette .k8 { background: #00a2e8; } .palette .k9 { background: #3f48cc; } .palette .k10 { background: #a349a4; }
.palette .k11 { background: #fff; } .palette .k12 { background: #c3c3c3; } .palette .k13 { background: #b97a57; } .palette .k14 { background: #ffaec9; } .palette .k15 { background: #ffc90e; }
.palette .k16 { background: #efe4b0; } .palette .k17 { background: #b5e61d; } .palette .k18 { background: #99d9ea; } .palette .k19 { background: #7092be; } .palette .k20 { background: #c8bfe7; }
.pal-label { display: block; margin-top: 8px; text-align: center; }
.wheel { width: 18px; height: 18px; margin: 26px 0 0 17px; border-radius: 50%; background: radial-gradient(#fff, rgba(255,255,255,0) 70%), conic-gradient(#8f0, #0d8 70deg, #0cf 110deg, #22f 170deg, #f0f 215deg, #f03 265deg, #fb0 310deg, #8f0); position: relative; }
.wheel span { position: absolute; left: 12px; top: -2px; width: 8px; height: 8px; border-radius: 50%; border: 1px solid #555; background: #fff; }

.canvas-row { height: 415px; display: flex; background: #fff; }
.canvas { width: 1092px; height: 415px; }
.ink-text { font-family: Lato, sans-serif; font-weight: 700; font-size: 17.100px; fill: #e3202a; font-variant-ligatures: none; }
.ink-small { font-size: 14.200px; }
.vscroll { width: 12px; background: #f1eff3; display: flex; flex-direction: column; align-items: center; }
.vscroll span { width: 5px; height: 161px; margin: 103px 0 133px 0; background: #858585; }
.vscroll .up { margin-top: 4px; border: 3px solid transparent; border-top: 0; border-bottom: 5px solid #888; }
.vscroll .down { border: 3px solid transparent; border-bottom: 0; border-top: 5px solid #777; }
.hscroll { height: 13px; background: #f1eef3; padding: 4px 0 0 12px; }
.hscroll span { display: block; width: 524px; height: 4px; background: #858585; }
.p-status { height: 21px; background: #f6effa; display: flex; font-size: 8.500px; line-height: 21px; }
.st-left { width: 218px; height: 21px; }
.dims { margin-left: 3px; letter-spacing: -.1px; }
.pct { margin-left: auto; width: 30px; letter-spacing: -.3px; }
.st-right { width: 147px; height: 21px; }
.mini-bar { height: 35px; background: #ead4f6; display: flex; font-size: 8.700px; line-height: 11px; }
.mini-sun { width: 17px; height: 17px; margin: 10px 0 0 15px; }
.mini-weather { width: 315.200px; padding: 7px 0 0 5px; display: flex; flex-direction: column; }
.mini-weather em { font-style: normal; color: #6d6272; letter-spacing: -.1px; }
.mini-weather span, .mini-time span { letter-spacing: -.25px; }
.mini-icons { display: flex; }
.mini-icons > span { width: 31.600px; display: flex; justify-content: center; padding-top: 10px; position: relative; height: 35px; }
.mini-icons svg { width: 17px; height: 17px; }
.mini-icons .on::before, .mini-icons .mail::before { content: ""; position: absolute; left: 2px; top: 4px; width: 28px; height: 28px; border-radius: 3px; background: #f4eafb; }
.mini-icons .mail::before { background: #fae1e4; }
.mini-icons .on svg, .mini-icons .mail svg { position: relative; }
.mini-icons .run::after, .mini-icons .on::after, .mini-icons .mail::after { content: ""; position: absolute; left: 13.500px; top: 29px; width: 4.500px; height: 2.500px; border-radius: 2px; background: #8a7c94; }
.mini-icons .on::after { left: 10.500px; width: 11px; background: #1273ce; }
.mini-icons .mail::after { background: #c4291c; }
.count { position: absolute; left: 16px; top: 7px; width: 12px; height: 10px; border-radius: 5px; background: #c4173e; color: #fff; font-size: 7px; line-height: 10px; text-align: center; }
.mini-tray { display: flex; margin-left: auto; }
.mt-chev { width: 9px; height: 5px; margin-top: 16px; }
.mt-cloud { width: 12px; height: 8px; margin: 14px 0 0 8px; }
.mt-mic { width: 23px; height: 29px; margin: 3px 0 0 2px; border-radius: 3px; background: #0a63bd; padding: 8px 0 0 7px; }
.mt-mic svg { width: 9px; height: 13px; }
.mt-wifi { width: 12px; height: 10px; margin: 13px 0 0 6px; }
.mt-vol { width: 13px; height: 11px; margin: 12px 0 0 5px; }
.mt-bat { width: 12px; height: 10px; margin: 13px 0 0 5px; }
.mini-time { width: 48px; padding-top: 6px; display: flex; flex-direction: column; text-align: right; line-height: 12px; }
.mt-moon { width: 9px; height: 12px; margin: 12px 14px 0 10px; }
.watermark { position: absolute; left: 1023px; top: 547px; width: 50px; height: 37px; opacity: .52; }
.edge-cursor { position: absolute; left: 1102px; top: 339px; width: 3px; height: 11px; }

/* participants */
.panel { width: 562px; height: 834px; border-radius: 18px; background: #1a1a1a; }
.panel-head { height: 84px; display: flex; align-items: flex-start; }
.ph-chev { width: 20px; height: 11px; margin: 31px 0 0 20px; }
.panel h2 { margin: 18px 0 0 14px; font-size: 22.300px; font-weight: 600; line-height: 40px; width: 427px; letter-spacing: .15px; }
.ph-pop { width: 18px; height: 18px; margin-top: 27px; }
.ph-x { width: 16px; height: 16px; margin: 28px 0 0 25px; }
.search-row { height: 54px; display: flex; }
.search { width: 469px; height: 42px; margin-left: 21px; border: 1.500px solid #999; border-radius: 11px; background: #000; display: flex; padding-left: 12px; }
.search svg { width: 17px; height: 17px; margin-top: 12px; }
.search span { margin: 2px 0 0 12px; font-size: 20px; line-height: 40px; color: #a2a2a2; }
.sort { width: 22px; height: 20px; margin: 11px 0 0 25px; }
.list-wrap { display: flex; }
.list { list-style: none; margin: 0 6px; padding: 0; width: 526px; }
.list li { height: 75px; display: flex; align-items: center; padding: 0 23px 0 22.500px; border-radius: 38px; }
.list .hover { background: #252525; }
.av { width: 44px; height: 44px; border-radius: 50%; background: #5f5f5f; font-size: 20px; line-height: 44px; text-align: center; position: relative; letter-spacing: -.5px; }
.badge { position: absolute; left: 21px; top: 25px; width: 22px; height: 21px; border: 2px solid #1a1a1a; border-radius: 5px; background: #fb4f66; padding: 2.500px 0 0 3.500px; }
.badge svg { width: 11px; height: 12px; }
.hs { width: 22px; height: 22px; margin: -4px 0 0 18px; }
.two .hs { margin-top: -9px; }
.host .hs { margin-top: -4px; }
.nm { margin-left: 14.500px; flex: 1; font-size: 22.500px; line-height: 32px; letter-spacing: .05px; }
.nm small { display: block; font-size: 19.500px; line-height: 24px; color: #a6a6a6; }
.two .nm { padding-bottom: 3px; }
.mic { width: 20px; height: 22px; margin-top: -3px; color: #f2727f; }
.live { width: 14px; }
.hand { width: 15px; height: 22px; margin: -4px 172px 0 0; }
.msg { width: 21px; height: 20px; margin: -3px 43px 0 0; }
.pscroll { width: 24px; height: 677px; border-radius: 12px; background: #323232; display: flex; flex-direction: column; align-items: center; color: #c8c8c8; }
.pscroll svg { width: 15px; height: 8px; margin-top: 8px; }
.pscroll span { width: 12px; height: 112px; margin-top: 9px; border-radius: 6px; background: #606060; }
.pscroll .dn { margin: auto 0 7px; }

/* call controls */
.controls { height: 90px; display: flex; align-items: center; font-size: 22.500px; font-weight: 600; }
.cc { width: 27px; height: 23px; margin: -2px 0 0 46px; }
.cc-t { font-size: 10.500px; font-weight: 700; fill: #f5f5f5; }
.pills { display: flex; gap: 18.300px; margin-left: 432px; }
.pill { height: 60px; border: 1.500px solid #505050; border-radius: 30px; display: flex; align-items: center; }
.pill span { padding-top: 3px; }
.p-unmute { width: 201px; padding-left: 22px; }
.p-unmute span { margin-left: 15px; width: 109px; }
.p-video { width: 227px; padding-left: 20px; }
.p-video span { margin-left: 14.500px; width: 137px; letter-spacing: .1px; }
.p-share { width: 140px; padding-left: 15px; }
.p-share span { margin-left: 14px; }
.p-react { width: 126px; padding-left: 20px; }
.p-react i { width: 1px; height: 33px; margin: 0 19px 0 24px; background: #3c3c3c; }
.p-more, .p-end { width: 60px; justify-content: center; }
.p-end { background: #db1e30; border-color: #db1e30; }
.p-end svg { width: 20px; height: 20px; }
.red { color: #f2727f; }
.i-mic { width: 25px; height: 27px; }
.i-cam { width: 26px; height: 24px; }
.i-share { width: 27px; height: 23px; }
.i-hand { width: 18px; height: 27px; }
.i-smile { width: 27px; height: 27px; }
.i-chev { width: 16px; height: 9px; }
.i-dots { width: 18px; height: 4px; }
.apps-i { width: 25px; height: 25px; margin-left: 140.500px; }
.apps-t { margin-left: 14px; width: 93px; padding-top: 3px; }
.people { width: 60px; height: 60px; border-radius: 50%; background: #333; display: flex; justify-content: center; align-items: center; }
.people svg { width: 26px; height: 27px; }
.c-chat { width: 26px; height: 25px; margin-left: 35px; }
.c-dots { width: 15px; height: 4px; margin-left: 58px; }

/* taskbar */
.taskbar { height: 72px; background: #e8d6f5; display: flex; align-items: flex-start; color: #1d1a20; font-size: 16.700px; line-height: 23px; letter-spacing: -.15px; }
.sun { width: 30px; height: 30px; margin: 22px 0 0 33px; }
.weather { width: 586px; padding: 14px 0 0 14.500px; display: flex; flex-direction: column; letter-spacing: -.2px; }
.weather em { font-style: normal; color: #5f5468; line-height: 25px; letter-spacing: 0; }
.icons { display: flex; margin-left: 14.300px; }
.icons > span { width: 66px; height: 72px; display: flex; justify-content: center; padding-top: 20px; position: relative; }
.icons svg { width: 36px; height: 36px; position: relative; }
.icons .on::before { content: ""; position: absolute; left: 5px; top: 9px; width: 56px; height: 57px; border-radius: 6px; background: #f2ebf9; box-shadow: 0 1px 1px #cdbddb; }
.icons .mail::before { content: ""; position: absolute; left: 3px; top: 7px; width: 60px; height: 60px; border-radius: 7px; background: #fbe3e6; }
.icons .run::after, .icons .on::after, .icons .mail::after { content: ""; position: absolute; left: 29px; top: 61px; width: 9px; height: 5px; border-radius: 3px; background: #85788f; }
.icons .on::after { left: 21px; width: 24px; background: #0a72cf; }
.icons .mail::after { background: #c4291c; }
.tray { display: flex; margin-left: 350.700px; }
.t-chev { width: 18px; height: 10px; margin-top: 31px; }
.t-mic { width: 48px; height: 58px; margin: 6px 0 0 9px; border-radius: 6px; background: #f2eaf9; padding: 17px 0 0 12px; }
.t-mic svg { width: 24px; height: 24px; }
.t-wifi { width: 24px; height: 18px; margin: 26px 0 0 12px; }
.t-vol { width: 25px; height: 21px; margin: 25px 0 0 12px; }
.t-bat { width: 24px; height: 19px; margin: 25px 0 0 11px; }
.time { width: 100px; padding-top: 13px; display: flex; flex-direction: column; text-align: right; font-size: 17px; }
```
